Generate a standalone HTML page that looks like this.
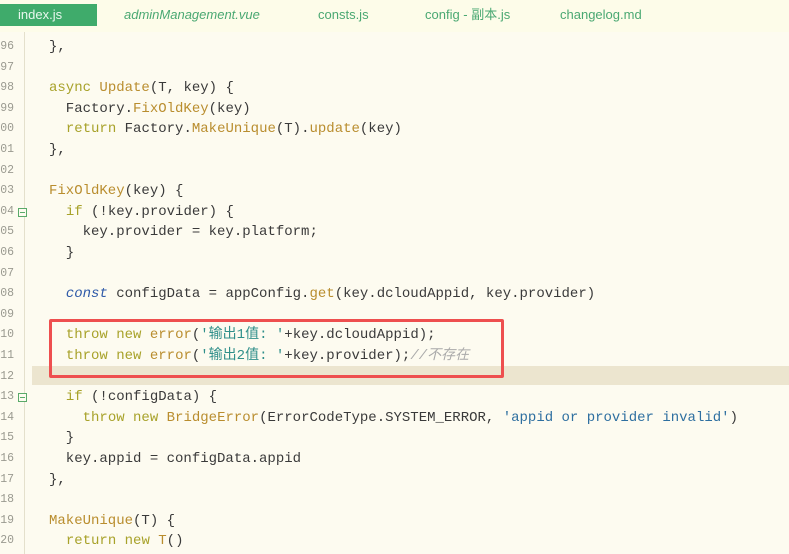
<!DOCTYPE html>
<html><head><meta charset="utf-8"><style>
*{margin:0;padding:0;box-sizing:border-box}
body{width:789px;height:554px;overflow:hidden;background:#fdfbf0;position:relative;font-family:"Liberation Mono","Noto Sans CJK SC",monospace}
.tabs{position:absolute;left:0;top:0;width:789px;height:32px;background:#fdfce9;font-family:"Liberation Sans","Noto Sans CJK SC",sans-serif;font-size:13px;color:#4aa872}
.tab{position:absolute;top:4px;height:22px;line-height:22px}
.act{left:0;width:97px;background:#3fab6b;color:#e8f7ee;padding-left:18px}
.ln{position:absolute;left:0;width:14px;text-align:right;font-size:11.5px;color:#9a9a90;font-family:"Liberation Mono",monospace}
.code{position:absolute;left:49px;font-size:14px;color:#3a3a3a;white-space:pre;line-height:20px}
.k{color:#a8a22a}.f{color:#b98d2e}.s{color:#2f8f8a}.c{color:#aaa;font-style:italic}.i{color:#2f5aa8;font-style:italic}.s2{color:#2e6fa0}
.gut{position:absolute;left:24px;top:32px;width:1px;height:522px;background:#e4e0cc}
.fold{position:absolute;left:18px;width:9px;height:9px;border:1px solid #5aaa6a;background:#fdfbf0}
.fold:after{content:"";position:absolute;left:1px;top:3px;width:5px;height:1px;background:#5aaa6a}
</style></head><body>
<div class="tabs">
<div class="tab act">index.js</div>
<div class="tab" style="left:124px;font-style:italic">adminManagement.vue</div>
<div class="tab" style="left:318px">consts.js</div>
<div class="tab" style="left:425px">config - 副本.js</div>
<div class="tab" style="left:560px">changelog.md</div>
</div>
<div style="position:absolute;left:32px;top:366px;width:757px;height:19px;background:#ece5cf"></div>
<div class="gut"></div>
<div id="lines"></div>
<div style="position:absolute;left:49px;top:319px;width:455px;height:59px;border:3px solid #ee4f4f;border-radius:2px"></div>
<script>
var L=[
["96","},"],["97",""],["98",'<span class="k">async</span> <span class="f">Update</span>(T, key) {'],
["99",'  Factory.<span class="f">FixOldKey</span>(key)'],
["00",'  <span class="k">return</span> Factory.<span class="f">MakeUnique</span>(T).<span class="f">update</span>(key)'],
["01","},"],["02",""],["03",'<span class="f">FixOldKey</span>(key) {'],
["04",'  <span class="k">if</span> (!key.provider) {'],
["05",'    key.provider = key.platform;'],["06",'  }'],["07",""],
["08",'  <span class="i">const</span> configData = appConfig.<span class="f">get</span>(key.dcloudAppid, key.provider)'],
["09",""],
["10",'  <span class="k">throw</span> <span class="k">new</span> <span class="f">error</span>(<span class="s">\'输出1值: \'</span>+key.dcloudAppid);'],
["11",'  <span class="k">throw</span> <span class="k">new</span> <span class="f">error</span>(<span class="s">\'输出2值: \'</span>+key.provider);<span class="c">//不存在</span>'],
["12",""],
["13",'  <span class="k">if</span> (!configData) {'],
["14",'    <span class="k">throw</span> <span class="k">new</span> <span class="f">BridgeError</span>(ErrorCodeType.SYSTEM_ERROR, <span class="s2">\'appid or provider invalid\'</span>)'],
["15",'  }'],["16",'  key.appid = configData.appid'],["17","},"],["18",""],
["19",'<span class="f">MakeUnique</span>(T) {'],["20",'  <span class="k">return</span> <span class="k">new</span> <span class="f">T</span>()']];
var h="";
for(var i=0;i<L.length;i++){var y=37+i*20.6;
h+='<div class="ln" style="top:'+(y+3)+'px">'+L[i][0]+'</div><div class="code" style="top:'+y+'px">'+L[i][1]+'</div>';
if(L[i][0]=="04"||L[i][0]=="13")h+='<div class="fold" style="top:'+(y+6)+'px"></div>';}
document.getElementById("lines").innerHTML=h;
</script>
</body></html>
